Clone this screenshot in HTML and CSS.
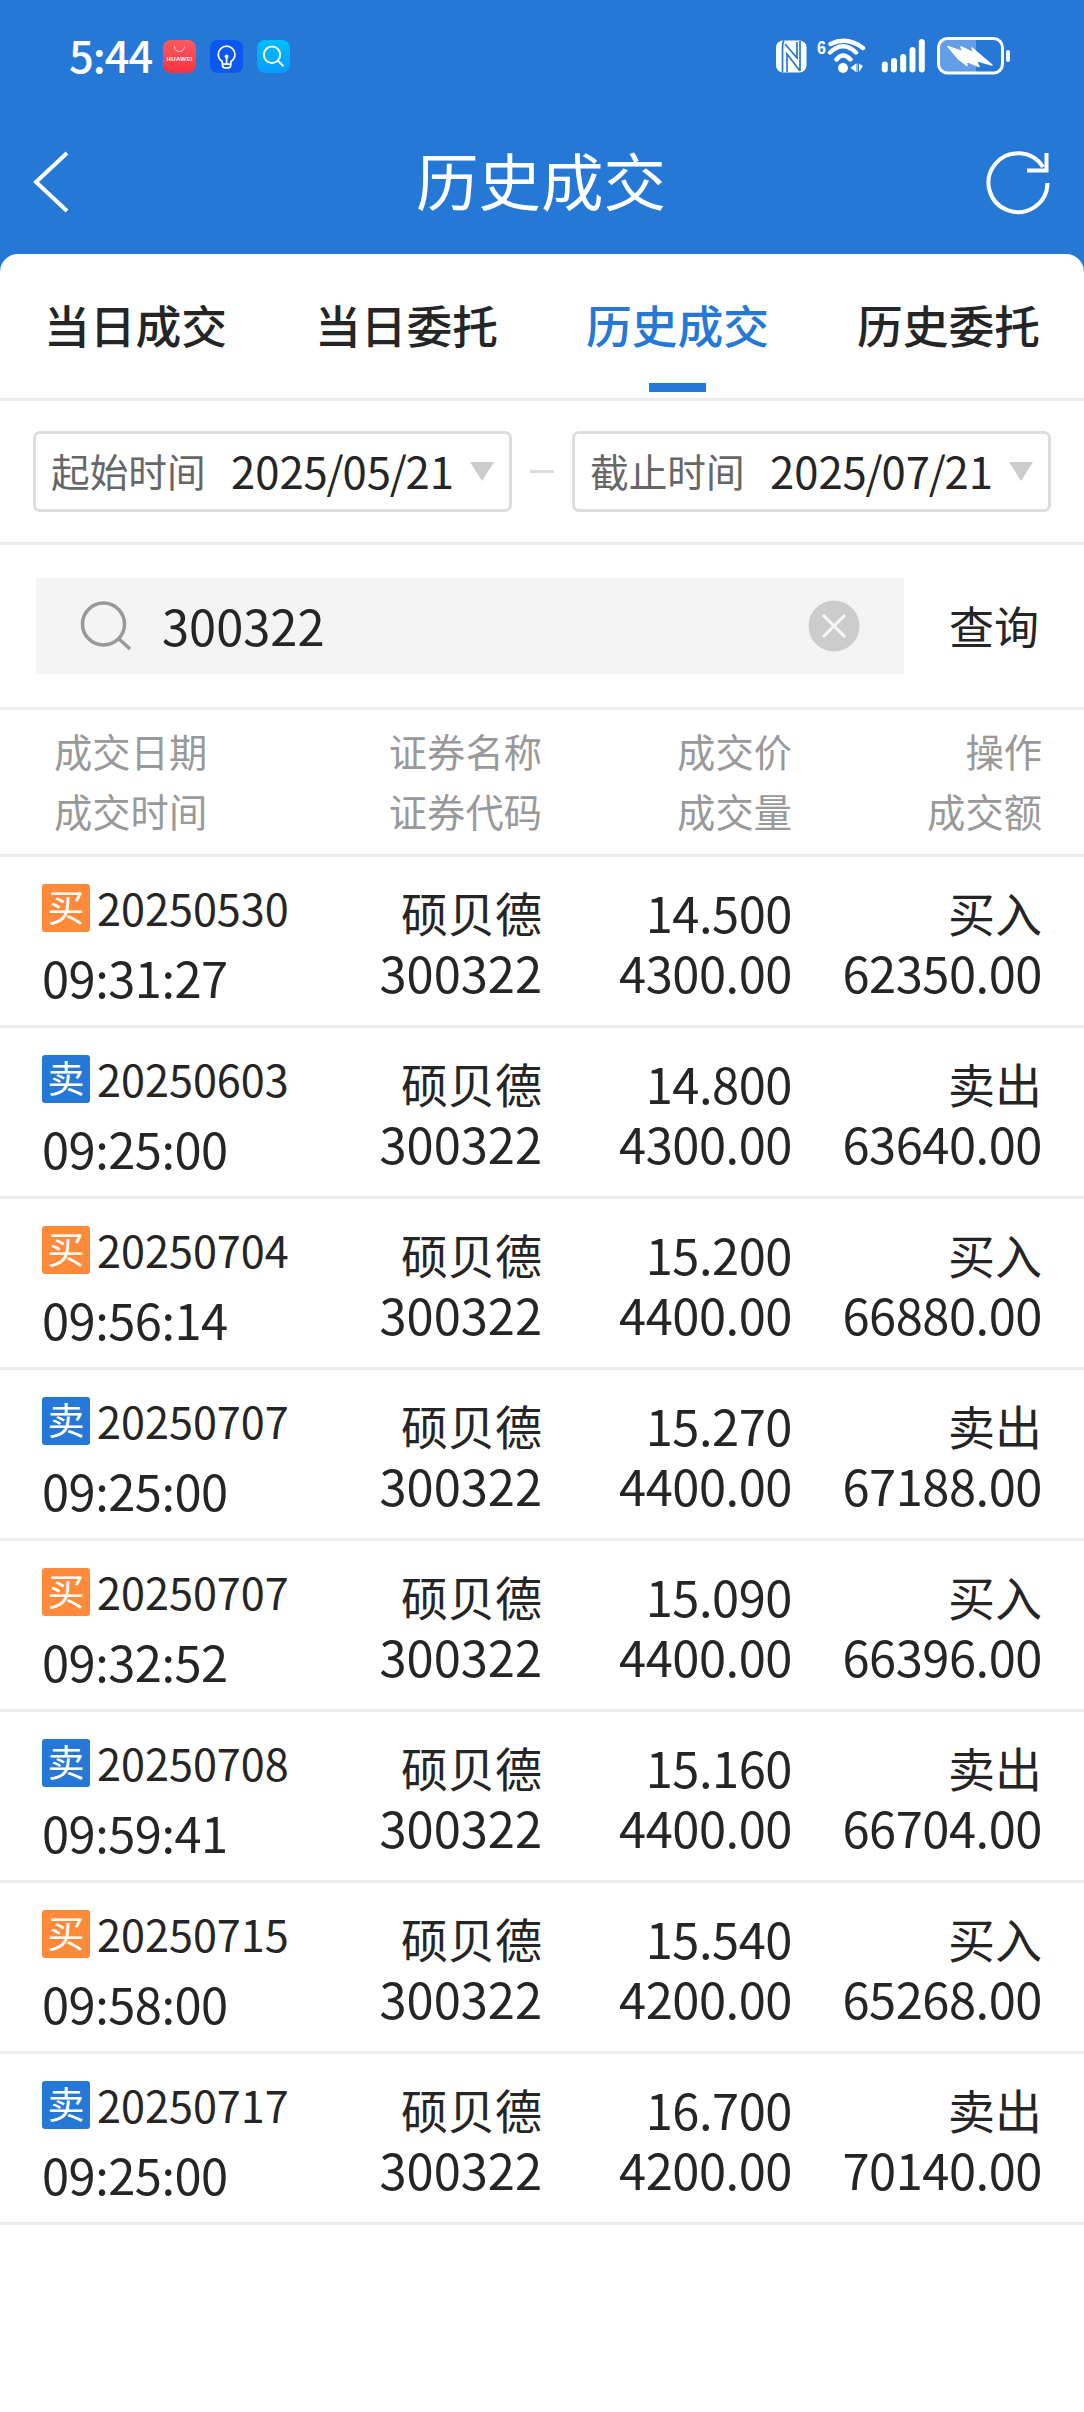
FILE: index.html
```html
<!DOCTYPE html>
<html lang="zh-CN">
<head>
<meta charset="utf-8">
<title>历史成交</title>
<link rel="stylesheet" href="styles.css">
</head>
<body>
<header class="top">
  <div class="status">
    <div class="status-left">
      <span class="clock">5:44</span>
      <svg class="app" viewBox="0 0 33 33"><defs><linearGradient id="r" x2="0" y2="1"><stop stop-color="#ff5a60"/><stop offset="1" stop-color="#f9323f"/></linearGradient></defs><rect width="33" height="33" rx="8" fill="url(#r)"/><path d="M11.5 6.5a5 5 0 0 0 10 0" fill="none" stroke="#ffd5d5" stroke-width="1"/><text class="brand" x="16.5" y="21.3" text-anchor="middle" textLength="26">HUAWEI</text></svg>
      <svg class="app" viewBox="0 0 33 33"><rect width="33" height="33" rx="8" fill="#0b57f0"/><g fill="none" stroke="#fff" stroke-width="1.7"><path d="M12.3 24.2v-2.7c-2.300-1.500-4-4-4-7a8.300 8.300 0 0 1 16.600 0c0 3-1.700 5.500-4 7v2.700zM12.600 24.200v1.400q0 2.300 2.300 2.300h3.400q2.300 0 2.300-2.300v-1.400M16.600 17v7"/></g><circle cx="16.600" cy="16.500" r="1.900" fill="#fff"/></svg>
      <svg class="app" viewBox="0 0 33 33"><defs><linearGradient id="b" x2="0" y2="1"><stop stop-color="#00beff"/><stop offset="1" stop-color="#089bff"/></linearGradient></defs><rect width="33" height="33" rx="8" fill="url(#b)"/><g fill="none" stroke="#fff" stroke-width="2"><circle cx="15" cy="14.800" r="8.200"/><path d="M20.800 20.600l5.700 5.700"/></g></svg>
    </div>
    <svg class="status-right" viewBox="0 0 240 44">
      <g fill="#fff">
        <rect x="1" y="6.500" width="30.500" height="32" rx="7"/>
        <text class="gen" x="42" y="20" textLength="9" lengthAdjust="spacingAndGlyphs">6</text>
        <circle cx="68" cy="34" r="5"/>
        <path d="M81 29.500v8.500l-5.500-4.200zM84 29.500v8.500l4-6z"/><path d="M82 29.500v8.500" stroke="#fff"/>
      </g>
      <path d="M9 6.500q-1.500 2-1.500 8V38M10 10l12 14V8M12 38V20l13 17M25 7v30" fill="none" stroke="#2578d5" stroke-width="1.700"/>
      <g fill="none" stroke="#fff" stroke-width="4.400"><path d="M55.500 10q16.500-8 32.500 4M55 18.500q13-12.500 26 0M61.500 25.500q6.500-8 14 0" stroke-linecap="round"/></g>
      <g stroke="#fff" stroke-width="6" stroke-linecap="round"><path d="M109.800 30.500v5M119 27v8.500M128.200 23v12.500M137.500 16v19.500M146.800 8v27.500"/></g>
      <path d="M171 5h30v33h-30q-9 0-9-9V14q0-9 9-9z" fill="#659de6"/>
      <rect x="163.500" y="4.500" width="64" height="34.500" rx="9" fill="none" stroke="#fff" stroke-width="3"/>
      <rect x="231" y="16" width="4" height="12" rx="2" fill="#fff"/>
      <path d="M173 12.500l15 5.500-2-5 13 6-2-5 20 17-16-4.500 3 6-13-5.500 1 4.500-8-6z" fill="#fff" stroke="#fff" stroke-width="1.500" stroke-linejoin="round"/>
    </svg>
  </div>
  <div class="nav">
    <svg class="back" viewBox="0 0 40 64"><path d="M36 3L5 32l31 29" fill="none" stroke="#fff" stroke-width="4"/></svg>
    <h1>历史成交</h1>
    <svg class="reload" viewBox="0 0 66 66"><path d="M62.500 34A29.500 29.500 0 1 1 58 18M61.500 4v17.500H42" fill="none" stroke="#fff" stroke-width="4"/></svg>
  </div>
</header>
<main class="sheet">
  <nav class="tabs">
    <a>当日成交</a><a>当日委托</a><a class="active">历史成交</a><a>历史委托</a>
  </nav>
  <section class="dates">
    <div class="date"><label>起始时间</label><span class="day">2025<i>/</i>05<i>/</i>21</span><b class="caret"></b></div>
    <span class="dash"></span>
    <div class="date"><label>截止时间</label><span class="day">2025<i>/</i>07<i>/</i>21</span><b class="caret"></b></div>
  </section>
  <section class="search">
    <div class="field">
      <svg class="lens" viewBox="0 0 52 52"><g fill="none" stroke="#999" stroke-width="3.500"><circle cx="23.500" cy="24" r="21"/><path d="M38.500 38.500l11.500 10.500"/></g></svg>
      <span class="code">300322</span>
      <svg class="clear" viewBox="0 0 52 52"><circle cx="26" cy="26" r="25.500" fill="#ccc"/><path d="M15 15l22 22M37 15L15 37" stroke="#f8f8f8" stroke-width="3"/></svg>
    </div>
    <button class="query">查询</button>
  </section>
  <section class="row head">
    <div>成交日期<br>成交时间</div><div>证券名称<br>证券代码</div><div>成交价<br>成交量</div><div>操作<br>成交额</div>
  </section>
  <section class="row"><div class="when"><p><em class="buy">买</em>20250530</p><time>09:31:27</time></div><div><span class="zh">硕贝德</span>300322</div><div class="num"><span>14.500</span><span>4300.00</span></div><div><span class="zh">买入</span><span class="sum">62350.00</span></div></section>
  <section class="row"><div class="when"><p><em class="sell">卖</em>20250603</p><time>09:25:00</time></div><div><span class="zh">硕贝德</span>300322</div><div class="num"><span>14.800</span><span>4300.00</span></div><div><span class="zh">卖出</span><span class="sum">63640.00</span></div></section>
  <section class="row"><div class="when"><p><em class="buy">买</em>20250704</p><time>09:56:14</time></div><div><span class="zh">硕贝德</span>300322</div><div class="num"><span>15.200</span><span>4400.00</span></div><div><span class="zh">买入</span><span class="sum">66880.00</span></div></section>
  <section class="row"><div class="when"><p><em class="sell">卖</em>20250707</p><time>09:25:00</time></div><div><span class="zh">硕贝德</span>300322</div><div class="num"><span>15.270</span><span>4400.00</span></div><div><span class="zh">卖出</span><span class="sum">67188.00</span></div></section>
  <section class="row"><div class="when"><p><em class="buy">买</em>20250707</p><time>09:32:52</time></div><div><span class="zh">硕贝德</span>300322</div><div class="num"><span>15.090</span><span>4400.00</span></div><div><span class="zh">买入</span><span class="sum">66396.00</span></div></section>
  <section class="row"><div class="when"><p><em class="sell">卖</em>20250708</p><time>09:59:41</time></div><div><span class="zh">硕贝德</span>300322</div><div class="num"><span>15.160</span><span>4400.00</span></div><div><span class="zh">卖出</span><span class="sum">66704.00</span></div></section>
  <section class="row"><div class="when"><p><em class="buy">买</em>20250715</p><time>09:58:00</time></div><div><span class="zh">硕贝德</span>300322</div><div class="num"><span>15.540</span><span>4200.00</span></div><div><span class="zh">买入</span><span class="sum">65268.00</span></div></section>
  <section class="row"><div class="when"><p><em class="sell">卖</em>20250717</p><time>09:25:00</time></div><div><span class="zh">硕贝德</span>300322</div><div class="num"><span>16.700</span><span>4200.00</span></div><div><span class="zh">卖出</span><span class="sum">70140.00</span></div></section>
</main>
</body>
</html>
```
FILE: styles.css
```css
* { box-sizing: border-box; margin: 0; padding: 0; }
body { background: #2578d5; color: #252525; font-family: "Noto Sans CJK SC", sans-serif; width: 1084px; }
i, em { font-style: normal; }

.top { height: 254px; color: #fff; }
.status { height: 110px; display: flex; justify-content: space-between; padding: 0 69px 0 69px; }
.status-left { display: flex; align-items: flex-start; gap: 14px; padding-top: 40px; }
.clock { width: 80px; height: 33px; font-size: 43.500px; font-weight: 500; line-height: 30px; white-space: nowrap; letter-spacing: -1px; }
.app { width: 33px; height: 33px; }
.brand { font: 700 6px "Liberation Sans", sans-serif; fill: #fff; }
.status-right { width: 240px; height: 44px; margin-top: 34px; }
.gen { font: 700 18px "Liberation Sans", sans-serif; }
.nav { height: 144px; display: grid; grid-template-columns: 66px 1fr 66px; align-items: center; padding: 0 33px 0 31px; }
.nav h1 { font-size: 62.500px; font-weight: 400; line-height: 80px; text-align: center; margin-top: -6px; }
.back { width: 40px; height: 64px; }
.reload { width: 66px; height: 66px; }

.sheet { background: #fff; border-radius: 18px 18px 0 0; min-height: 2158px; }
.tabs { display: grid; grid-template-columns: repeat(4, 1fr); height: 147px; border-bottom: 3px solid #ededed; }
.tabs a { display: flex; flex-direction: column; align-items: center; font-size: 45.800px; font-weight: 500; line-height: 141px; }
.tabs .active { color: #2578d5; }
.active::after { content: ""; width: 57px; height: 9px; margin-top: -12px; background: #2578d5; }

.dates { display: flex; align-items: center; justify-content: space-between; height: 144px; padding: 0 33px; border-bottom: 3px solid #ededed; }
.date { display: flex; align-items: center; width: 479px; height: 81px; padding: 0 15px; border: 3px solid #ddd; border-radius: 7px; line-height: 74px; }
.date label { width: 180px; margin-top: -3px; font-size: 38.700px; color: #666; }
.day { width: 239px; margin-top: -3px; font-size: 43.600px; white-space: nowrap; }
.day i { margin: 0 -1.200px; }
.caret { width: 24px; height: 19px; background: #ccc; clip-path: polygon(0 0, 100% 0, 50% 100%); }
.dash { width: 24px; height: 3px; background: #ddd; }

.search { display: flex; align-items: center; height: 165px; padding: 0 0 0 36px; border-bottom: 3px solid #ededed; }
.field { display: flex; align-items: center; width: 868px; height: 96px; padding: 0 44px; background: #f4f4f4; }
.lens { width: 52px; height: 52px; }
.code { flex: 1; margin: -3px 0 0 30px; font-size: 48.800px; line-height: 88px; }
.clear { width: 52px; height: 52px; }
.query { margin-left: 45px; border: 0; background: none; color: inherit; font: 400 45px/86px "Noto Sans CJK SC", sans-serif; white-space: nowrap; }

.row { display: grid; grid-template-columns: 300px 200px 250px 250px; height: 171px; padding: 25px 42px 0 42px; border-bottom: 3px solid #ededed; font-size: 48.800px; line-height: 60px; text-align: right; white-space: nowrap; }
.row .zh { display: block; height: 60px; font-size: 47px; line-height: 59px; }
.num span, .sum { display: block; letter-spacing: -.45px; }
.head { height: 147px; padding-top: 11px; font-size: 38.300px; color: #999; }
.head div:first-child { text-align: left; padding-left: 12px; }
.when { text-align: left; margin-top: -5px; }
.when p { display: flex; align-items: center; height: 60px; gap: 7px; font-size: 43.200px; }
.when em { width: 48px; height: 48px; margin-top: 2px; border-radius: 3px; color: #fff; font-size: 37px; line-height: 45px; text-align: center; }
.when time { display: block; margin-top: 10px; letter-spacing: -.5px; }
.buy { background: #ff8a3a; }
.sell { background: #2578d5; }
```
